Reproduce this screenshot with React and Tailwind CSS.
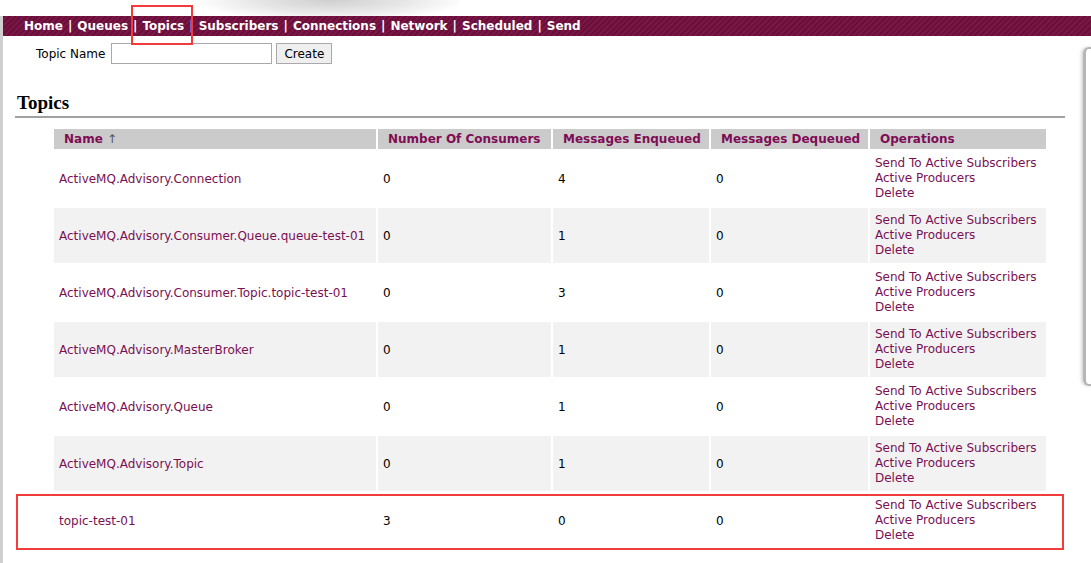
import React from "react";

const rows = [
  { name: "ActiveMQ.Advisory.Connection", consumers: 0, enq: 4, deq: 0 },
  { name: "ActiveMQ.Advisory.Consumer.Queue.queue-test-01", consumers: 0, enq: 1, deq: 0 },
  { name: "ActiveMQ.Advisory.Consumer.Topic.topic-test-01", consumers: 0, enq: 3, deq: 0 },
  { name: "ActiveMQ.Advisory.MasterBroker", consumers: 0, enq: 1, deq: 0 },
  { name: "ActiveMQ.Advisory.Queue", consumers: 0, enq: 1, deq: 0 },
  { name: "ActiveMQ.Advisory.Topic", consumers: 0, enq: 1, deq: 0 },
  { name: "topic-test-01", consumers: 3, enq: 0, deq: 0 },
];

const nav = ["Home", "Queues", "Topics", "Subscribers", "Connections", "Network", "Scheduled", "Send"];

export default function App() {
  return (
    <div
      className="relative w-[1091px] h-[563px] overflow-hidden bg-white text-[12px] text-black"
      style={{ fontFamily: "'DejaVu Sans', Verdana, sans-serif" }}
    >
      {/* logo smudge */}
      <div className="absolute left-[200px] top-[-20px] w-[260px] h-[40px] rounded-full bg-[radial-gradient(ellipse_at_center,#cfcfcf_0%,#e6e6e6_40%,#ffffff_75%)]" />

      <div className="h-[16px]" />
      <div className="relative border-l-[3px] border-[#cfcfcf] h-[547px]">
        <div className="h-[20px] bg-[repeating-linear-gradient(135deg,#6c0d3b_0px,#6c0d3b_2px,#761744_2px,#761744_4px)] pl-[21px] flex items-center text-white font-bold text-[12px] leading-none">
          {nav.map((n, i) => (
            <span key={n} className="flex items-center">
              {i > 0 && <span className="mx-[5px]">|</span>}
              <a>{n}</a>
            </span>
          ))}
        </div>

        <div className="flex items-center pl-[33px] pt-[7px] gap-[4px]">
          <span className="mr-[2px]">Topic Name</span>
          <input className="w-[161px] h-[21px] border border-[#a9a9a9] bg-white" />
          <button className="h-[21px] px-[7px] border border-[#a9a9a9] bg-[#efefef] text-[12px]">Create</button>
        </div>

        <div className="mt-[28px] ml-[12px] mr-[26px]">
          <h2
            className="text-[19px] font-bold leading-[22px] pl-[2px]"
            style={{ fontFamily: "'Liberation Serif', 'DejaVu Serif', serif" }}
          >
            Topics
          </h2>
          <div className="h-[2px] bg-[#a0a0a0] mt-[2px]" />
        </div>

        <table className="mt-[9px] ml-[49px] border-separate border-spacing-[2px] w-[996px]">
          <thead>
            <tr className="text-[#7f0d55] font-bold text-[12px] text-left">
              <th className="bg-[#cbcbcb] h-[20px] pl-[10px] w-[322px] font-bold">Name <span className="font-normal text-[#555]">↑</span></th>
              <th className="bg-[#cbcbcb] pl-[10px] w-[173px] font-bold">Number Of Consumers</th>
              <th className="bg-[#cbcbcb] pl-[10px] w-[156px] font-bold">Messages Enqueued</th>
              <th className="bg-[#cbcbcb] pl-[10px] w-[157px] font-bold">Messages Dequeued</th>
              <th className="bg-[#cbcbcb] pl-[10px] font-bold">Operations</th>
            </tr>
          </thead>
          <tbody>
            {rows.map((r, i) => (
              <tr key={r.name} className={i % 2 === 1 ? "bg-[#f2f2f2]" : "bg-white"}>
                <td className="h-[55px] pl-[5px] text-[#7a0f52]">{r.name}</td>
                <td className="pl-[5px]">{r.consumers}</td>
                <td className="pl-[5px]">{r.enq}</td>
                <td className="pl-[5px]">{r.deq}</td>
                <td className="pl-[5px] text-[#7a0f52] leading-[15px]">
                  <div>Send To Active Subscribers</div>
                  <div>Active Producers</div>
                  <div>Delete</div>
                </td>
              </tr>
            ))}
          </tbody>
        </table>
      </div>

      {/* right side panel edge */}
      <div className="absolute left-[1083px] top-[47px] w-[20px] h-[339px] rounded-l-[6px] border-l-[3px] border-y-[2px] border-[#b5b5b5] shadow-[-2px_0_3px_#d8d8d8]" />

      {/* annotation boxes */}
      <div className="absolute left-[131px] top-[5px] w-[62px] h-[40px] border-2 border-[#f23c3c]" />
      <div className="absolute left-[16px] top-[494px] w-[1048px] h-[56px] border-2 border-[#f23c3c]" />
    </div>
  );
}
